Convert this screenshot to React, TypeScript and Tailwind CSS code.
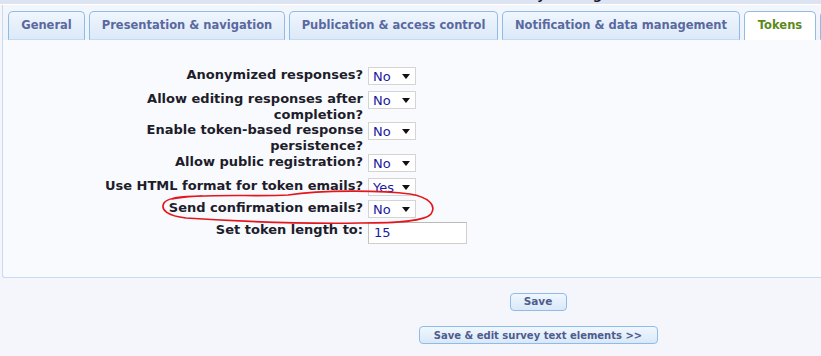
import React from "react";

const tabs = [
  { label: "General", w: "w-[77px]" },
  { label: "Presentation & navigation", w: "w-[196px]" },
  { label: "Publication & access control", w: "w-[209px]" },
  { label: "Notification & data management", w: "w-[238px]" },
];

function Select({ value }: { value: string }) {
  return (
    <div className="flex h-[18px] w-[48px] items-center justify-between border border-[#d4d4d4] bg-white pl-[4px] pr-[5px] text-[13px] leading-none text-[#1a1aa0]">
      <span>{value}</span>
      <svg width="8" height="5" viewBox="0 0 8 5">
        <path d="M0 0 L8 0 L4 5 Z" fill="#111" />
      </svg>
    </div>
  );
}

type Row = { label: string; h: string; ctrl: React.ReactNode };

const rows: Row[] = [
  { label: "Anonymized responses?", h: "h-[24px]", ctrl: <Select value="No" /> },
  { label: "Allow editing responses after completion?", h: "h-[31px]", ctrl: <Select value="No" /> },
  { label: "Enable token-based response persistence?", h: "h-[32px]", ctrl: <Select value="No" /> },
  { label: "Allow public registration?", h: "h-[24px]", ctrl: <Select value="No" /> },
  { label: "Use HTML format for token emails?", h: "h-[22px]", ctrl: <Select value="Yes" /> },
  { label: "Send confirmation emails?", h: "h-[22px]", ctrl: <Select value="No" /> },
  {
    label: "Set token length to:",
    h: "h-[22px]",
    ctrl: (
      <div className="flex h-[22px] w-[99px] items-center border border-[#cfcfcf] border-t-[#b9b9b9] border-l-[#c4c4c4] bg-white pl-[5px] text-[13px] text-[#1a1aa0]">
        15
      </div>
    ),
  },
];

export default function App() {
  return (
    <div
      className="relative h-[356px] w-[821px] overflow-hidden bg-[#f4f6fc]"
      style={{ fontFamily: '"DejaVu Sans", Verdana, sans-serif' }}
    >
      {/* clipped heading strip */}
      <div className="h-[4px] overflow-hidden bg-[#dbe4f0]">
        <div className="-mt-[13px] whitespace-nowrap pl-[463px] text-[13px] font-bold leading-[16px] text-[#1a1a2e]">
          Edit survey settings
        </div>
      </div>
      <div className="h-[1px] bg-white" />
      {/* panel */}
      <div className="ml-[2px] rounded-bl-[3px] border-b border-l border-[#c8dbf1] bg-[#f9fafe]">
        {/* tabs */}
        <div className="flex h-[35px] items-end gap-[4px] bg-gradient-to-b from-[#f3f6fb] to-[#eef3fa] pl-[5px]">
          {tabs.map((t) => (
            <div
              key={t.label}
              className={`${t.w} flex h-[29px] shrink-0 items-center justify-center rounded-t-[5px] border border-[#8fbbe8] border-b-[#c4daf2] bg-gradient-to-b from-[#eff6fd] to-[#dce9f8] text-[11.5px] font-bold text-[#5a68a0]`}
            >
              {t.label}
            </div>
          ))}
          <div className="flex h-[29px] w-[72px] shrink-0 items-center justify-center rounded-t-[5px] border border-b-0 border-[#8fbbe8] bg-white text-[11.5px] font-bold text-[#5b8a1c]">
            Tokens
          </div>
          <div className="h-[29px] w-[20px] shrink-0 rounded-t-[5px] border border-[#8fbbe8] bg-gradient-to-b from-[#eff6fd] to-[#dce9f8]" />
        </div>
        {/* form */}
        <div className="flex h-[237px] flex-col pt-[27px]">
          {rows.map((r) => (
            <div key={r.label} className={`${r.h} flex items-start`}>
              <div className="w-[360px] shrink-0 pl-[98px] text-right text-[13px] font-bold leading-[16px] text-[#1d1d2b]">
                {r.label}
              </div>
              <div className="ml-[5px]">{r.ctrl}</div>
            </div>
          ))}
        </div>
      </div>
      {/* buttons */}
      <div className="flex flex-col items-center gap-[15px] pl-[255px] pt-[15px]">
        <div className="flex h-[18px] w-[57px] items-center justify-center rounded-[4px] border border-[#8fbbe8] bg-gradient-to-b from-[#f0f7fe] to-[#d9e8f8] text-[10.5px] font-bold text-[#4e5c8e]">
          Save
        </div>
        <div className="flex h-[18px] w-[239px] items-center justify-center rounded-[4px] border border-[#8fbbe8] bg-gradient-to-b from-[#f0f7fe] to-[#d9e8f8] text-[10px] font-bold text-[#4e5c8e]">
          Save &amp; edit survey text elements &gt;&gt;
        </div>
      </div>
      {/* red hand-drawn ellipse */}
      <svg className="pointer-events-none absolute left-0 top-0" width="821" height="356">
        <path
          d="M172 199 C 200 193, 255 197, 288 195 C 322 190, 380 190, 410 194 C 428 197, 437 205, 431 214 C 425 221, 400 223, 360 223 C 300 224, 232 221, 186 218 C 168 216, 160 210, 164 203 C 167 198, 181 196, 202 196"
          fill="none"
          stroke="#e3161c"
          strokeWidth="1.6"
          strokeLinecap="round"
        />
      </svg>
    </div>
  );
}
